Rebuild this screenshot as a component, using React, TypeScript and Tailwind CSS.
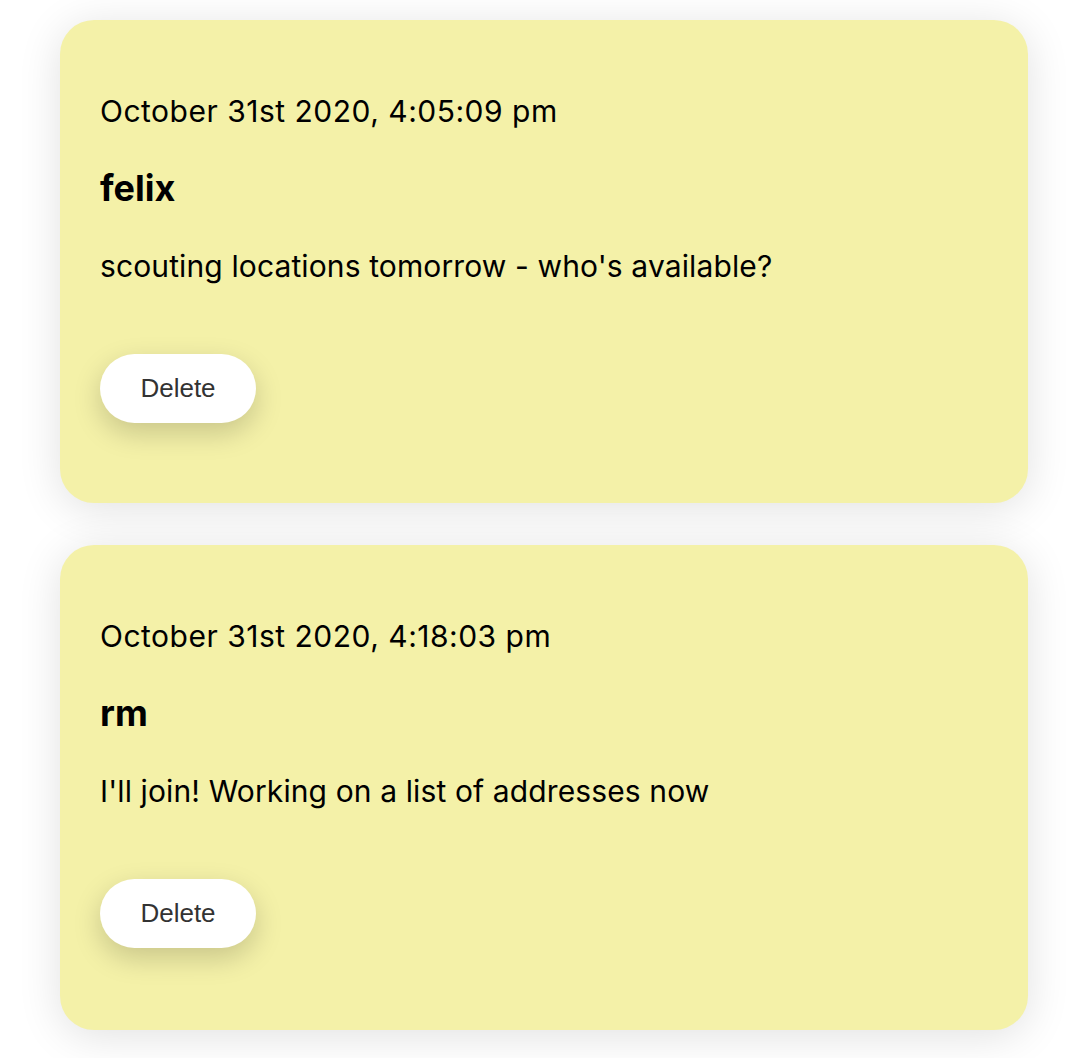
import React from "react";

const notes = [
  { date: "October 31st 2020, 4:05:09 pm", name: "felix", text: "scouting locations tomorrow - who's available?" },
  { date: "October 31st 2020, 4:18:03 pm", name: "rm", text: "I'll join! Working on a list of addresses now" },
];

export default function App() {
  return (
    <div className="min-h-[1058px] bg-white pt-[20px] px-[60px] [font-family:Inter,'Liberation_Sans',sans-serif] text-black">
      <div className="flex flex-col gap-[42px] w-[968px]">
        {notes.map((n, i) => (
          <div
            key={n.date}
            className={
              "bg-[#f4f1a8] rounded-[34px] pl-[40px] pt-[74px] shadow-[0_6px_44px_rgba(0,0,0,0.12)] " +
              (i === 0 ? "pb-[80px]" : "pb-[82px]")
            }
          >
            <div className="text-[30px] leading-[34px] tracking-[0.5px]">{n.date}</div>
            <div className="mt-[40px] text-[36px] leading-[40px] font-bold">{n.name}</div>
            <div className="mt-[41px] text-[30px] leading-[34px] tracking-[0.12px]">{n.text}</div>
            <button className="mt-[71px] w-[156px] h-[69px] rounded-full bg-white text-[#333] text-[26px] [font-family:'Liberation_Sans',Arial,sans-serif] flex items-center justify-center shadow-[0_10px_28px_rgba(0,0,0,0.18)]">
              Delete
            </button>
          </div>
        ))}
      </div>
    </div>
  );
}
